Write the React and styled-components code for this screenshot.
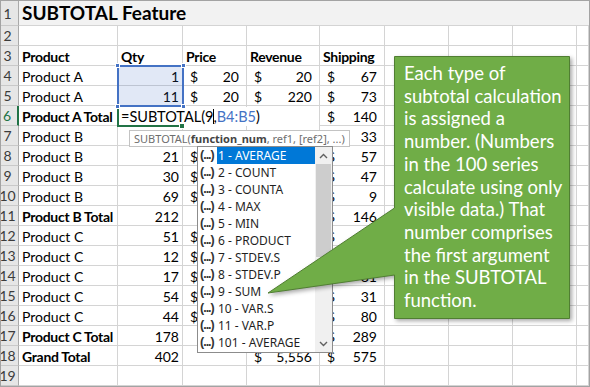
import React from "react";
import styled, { createGlobalStyle } from "styled-components";

const GlobalStyle = createGlobalStyle`
  html, body { margin: 0; padding: 0; background: #ffffff; }
  body { width: 590px; height: 387px; overflow: hidden; }
  *, *::before, *::after { box-sizing: border-box; }
`;

const CELL_FONT = `Lato, "Liberation Sans", sans-serif`;
const UI_FONT = `"Noto Sans", "Liberation Sans", sans-serif`;

const Page = styled.div`
  position: relative;
  width: 590px;
  height: 387px;
  overflow: hidden;
  font-family: ${CELL_FONT};
`;

const Sheet = styled.div`
  width: 590px;
  height: 387px;
  border: 1px solid #a3a3a3;
  display: grid;
  grid-template-columns: 18px 99px 65px 64px 73px 65px 64px 64px 64px 1fr;
  grid-template-rows: 25px repeat(18, 20px);
  overflow: hidden;
`;

const RowHead = styled.div`
  background: #e6e6e6;
  border-bottom: 1px solid #c9c9c9;
  border-right: ${(p) => (p.$active ? "2px solid #217346" : "1px solid #a9a9a9")};
  color: ${(p) => (p.$active ? "#217346" : "#3b3b3b")};
  font-size: 14px;
  line-height: 19px;
  display: flex;
  align-items: center;
  justify-content: center;
  padding-right: 4px;
  overflow: hidden;
  white-space: nowrap;
`;

const TitleCell = styled.div`
  grid-column: 2 / -1;
  background: #f2f2f2;
  border-bottom: 1px solid #d4d4d4;
  font-weight: 700;
  font-size: 19px;
  color: #000;
  display: flex;
  align-items: flex-end;
  padding: 0 0 1px 3px;
  white-space: nowrap;
`;

const Cell = styled.div`
  border-right: 1px solid #d4d4d4;
  border-bottom: 1px solid #d4d4d4;
  font-size: 14px;
  font-weight: ${(p) => (p.$bold ? 700 : 400)};
  letter-spacing: ${(p) => (p.$bold ? "-0.3px" : "0")};
  color: #000;
  display: flex;
  align-items: center;
  justify-content: ${(p) => (p.$right ? "flex-end" : "flex-start")};
  padding: 1px 3px 0 3px;
  white-space: nowrap;
  overflow: visible;
  min-width: 0;
`;

const AcctCell = styled(Cell)`
  justify-content: space-between;
  padding: 1px 7px 0 7px;
`;

const Selection = styled.div`
  position: absolute;
  left: 117px;
  top: 65px;
  width: 67px;
  height: 42px;
  border: 2px solid #4472c4;
  background: rgba(68, 114, 196, 0.16);
  z-index: 4;
`;

const Handle = styled.span`
  position: absolute;
  width: 5px;
  height: 5px;
  background: #4472c4;
  border: 1px solid #ffffff;
  ${(p) => (p.$top ? "top: -4px;" : "bottom: -4px;")}
  ${(p) => (p.$left ? "left: -4px;" : "right: -4px;")}
`;

const Editor = styled.div`
  position: absolute;
  left: 119px;
  top: 107px;
  width: 200px;
  height: 19px;
  background: #ffffff;
  font-size: 14.5px;
  padding-left: 2px;
  display: flex;
  align-items: center;
  white-space: nowrap;
  z-index: 2;
`;

const RefText = styled.span`
  color: #4472c4;
`;

const Caret = styled.span`
  display: inline-block;
  width: 1px;
  height: 15px;
  background: #000;
  margin-right: -1px;
`;

const ActiveBox = styled.div`
  position: absolute;
  left: 117px;
  top: 105px;
  width: 67px;
  height: 22px;
  border: 2px solid #217346;
  border-right: none;
  z-index: 3;
`;

const FillHandle = styled.span`
  position: absolute;
  left: 179px;
  top: 123px;
  width: 6px;
  height: 6px;
  background: #217346;
  border: 1px solid #fff;
  z-index: 3;
`;

const Tooltip = styled.div`
  position: absolute;
  left: 129px;
  top: 130px;
  width: 221px;
  height: 17px;
  background: #ffffff;
  border: 1px solid #c3c3c3;
  font-family: ${UI_FONT};
  font-size: 11px;
  color: #6e6e6e;
  padding-left: 4px;
  display: flex;
  align-items: center;
  white-space: nowrap;
  z-index: 6;
`;

const ArgBold = styled.b`
  color: #444;
  font-weight: 700;
`;

const List = styled.div`
  position: absolute;
  left: 197px;
  top: 146px;
  width: 136px;
  height: 207px;
  background: #ffffff;
  border: 1px solid #8c8c8c;
  display: grid;
  grid-template-columns: 1fr 17px;
  z-index: 7;
`;

const Items = styled.div`
  display: flex;
  flex-direction: column;
`;

const Item = styled.div`
  height: 17px;
  display: flex;
  align-items: center;
  font-family: ${UI_FONT};
  font-size: 12px;
  color: #1f1f1f;
`;

const FnIcon = styled.span`
  width: 19px;
  flex: none;
  font-family: "Liberation Sans", sans-serif;
  font-weight: 700;
  font-size: 12.5px;
  letter-spacing: -1px;
  color: #333;
  padding-left: 2px;
  margin-top: -2px;
`;

const Label = styled.span`
  flex: 1;
  height: 17px;
  display: flex;
  align-items: center;
  padding-left: 1px;
  background: ${(p) => (p.$hl ? "#0078d7" : "transparent")};
  color: ${(p) => (p.$hl ? "#ffffff" : "#1f1f1f")};
`;

const Scroll = styled.div`
  background: #f0f0f0;
  display: flex;
  flex-direction: column;
`;

const ScrollBtn = styled.div`
  height: 17px;
  flex: none;
  display: flex;
  align-items: center;
  justify-content: center;
`;

const Thumb = styled.div`
  height: 93px;
  margin: 0 1px;
  background: #cdcdcd;
  flex: none;
`;

const Spacer = styled.div`
  flex: 1;
`;

const CalloutShape = styled.svg`
  position: absolute;
  left: 260px;
  top: 50px;
  overflow: visible;
  filter: drop-shadow(2px 2px 2px rgba(0, 0, 0, 0.35));
  z-index: 8;
`;

const CalloutText = styled.div`
  position: absolute;
  left: 395px;
  top: 57px;
  width: 173px;
  padding: 5px 4px 0 9px;
  color: #ffffff;
  font-family: ${CELL_FONT};
  font-size: 18.5px;
  line-height: 22.7px;
  z-index: 9;
`;

const rows = [
  { n: 3, a: "Product", b: "Qty", c: "Price", d: "Revenue", e: "Shipping", head: true },
  { n: 4, a: "Product A", b: 1, c: 20, d: 20, e: 67 },
  { n: 5, a: "Product A", b: 11, c: 20, d: 220, e: 73 },
  { n: 6, a: "Product A Total", bold: true, e: 140 },
  { n: 7, a: "Product B", b: 92, c: 15, d: "1,380", e: 33 },
  { n: 8, a: "Product B", b: 21, c: 15, d: 315, e: 57 },
  { n: 9, a: "Product B", b: 30, c: 15, d: 450, e: 47 },
  { n: 10, a: "Product B", b: 69, c: 15, d: "1,035", e: 9 },
  { n: 11, a: "Product B Total", bold: true, b: 212, d: "3,180", e: 146 },
  { n: 12, a: "Product C", b: 51, c: 12, d: 612, e: 40 },
  { n: 13, a: "Product C", b: 12, c: 12, d: 144, e: 57 },
  { n: 14, a: "Product C", b: 17, c: 12, d: 204, e: 81 },
  { n: 15, a: "Product C", b: 54, c: 12, d: 648, e: 31 },
  { n: 16, a: "Product C", b: 44, c: 12, d: 528, e: 80 },
  { n: 17, a: "Product C Total", bold: true, b: 178, d: "2,136", e: 289 },
  { n: 18, a: "Grand Total", bold: true, b: 402, d: "5,556", e: 575 },
  { n: 19 },
];

const fns = [
  "1 - AVERAGE",
  "2 - COUNT",
  "3 - COUNTA",
  "4 - MAX",
  "5 - MIN",
  "6 - PRODUCT",
  "7 - STDEV.S",
  "8 - STDEV.P",
  "9 - SUM",
  "10 - VAR.S",
  "11 - VAR.P",
  "101 - AVERAGE",
];

function Money({ v }) {
  if (v === undefined || v === null) return <Cell />;
  return (
    <AcctCell>
      <span>$</span>
      <span>{v}</span>
    </AcctCell>
  );
}

function DataRow({ r }) {
  const blanks = Array.from({ length: 4 }, (_, i) => <Cell key={i} />);
  if (r.head) {
    return (
      <>
        <RowHead>{r.n}</RowHead>
        <Cell $bold>{r.a}</Cell>
        <Cell $bold>{r.b}</Cell>
        <Cell $bold>{r.c}</Cell>
        <Cell $bold>{r.d}</Cell>
        <Cell $bold>{r.e}</Cell>
        {blanks}
      </>
    );
  }
  return (
    <>
      <RowHead $active={r.n === 6}>{r.n}</RowHead>
      <Cell $bold={r.bold}>{r.a}</Cell>
      <Cell $right>{r.b}</Cell>
      <Money v={r.c} />
      <Money v={r.d} />
      <Money v={r.e} />
      {blanks}
    </>
  );
}

function Chevron({ up }) {
  return (
    <svg width="9" height="6" viewBox="0 0 9 6">
      <path
        d={up ? "M1 5 L4.5 1.5 L8 5" : "M1 1 L4.5 4.5 L8 1"}
        fill="none"
        stroke="#606060"
        strokeWidth="1.4"
      />
    </svg>
  );
}

export default function App() {
  return (
    <Page>
      <GlobalStyle />
      <Sheet>
        <RowHead>1</RowHead>
        <TitleCell>SUBTOTAL Feature</TitleCell>
        <RowHead>2</RowHead>
        {Array.from({ length: 9 }, (_, i) => (
          <Cell key={i} />
        ))}
        {rows.map((r) => (
          <DataRow key={r.n} r={r} />
        ))}
      </Sheet>

      <Selection>
        <Handle $top $left />
        <Handle $top />
        <Handle $left />
        <Handle />
      </Selection>

      <Editor>
        =SUBTOTAL(9<Caret />,<RefText>B4:B5</RefText>)
      </Editor>
      <ActiveBox />
      <FillHandle />

      <Tooltip>
        SUBTOTAL(<ArgBold>function_num</ArgBold>, ref1, [ref2], ...)
      </Tooltip>

      <List>
        <Items>
          {fns.map((f, i) => (
            <Item key={f}>
              <FnIcon>(...)</FnIcon>
              <Label $hl={i === 0}>{f}</Label>
            </Item>
          ))}
        </Items>
        <Scroll>
          <ScrollBtn>
            <Chevron up />
          </ScrollBtn>
          <Thumb />
          <Spacer />
          <ScrollBtn>
            <Chevron />
          </ScrollBtn>
        </Scroll>
      </List>

      <CalloutShape width="320" height="280" viewBox="0 0 320 280">
        <polygon
          points="134.5,6.5 309.5,6.5 309.5,268.5 134.5,268.5 134.5,225 8,243 134.5,158"
          fill="#70ad47"
          stroke="#507e32"
          strokeWidth="1"
        />
      </CalloutShape>
      <CalloutText>
        Each type of subtotal calculation is assigned a number. (Numbers in the 100 series
        calculate using only visible data.) That number comprises the first argument in the
        SUBTOTAL function.
      </CalloutText>
    </Page>
  );
}
